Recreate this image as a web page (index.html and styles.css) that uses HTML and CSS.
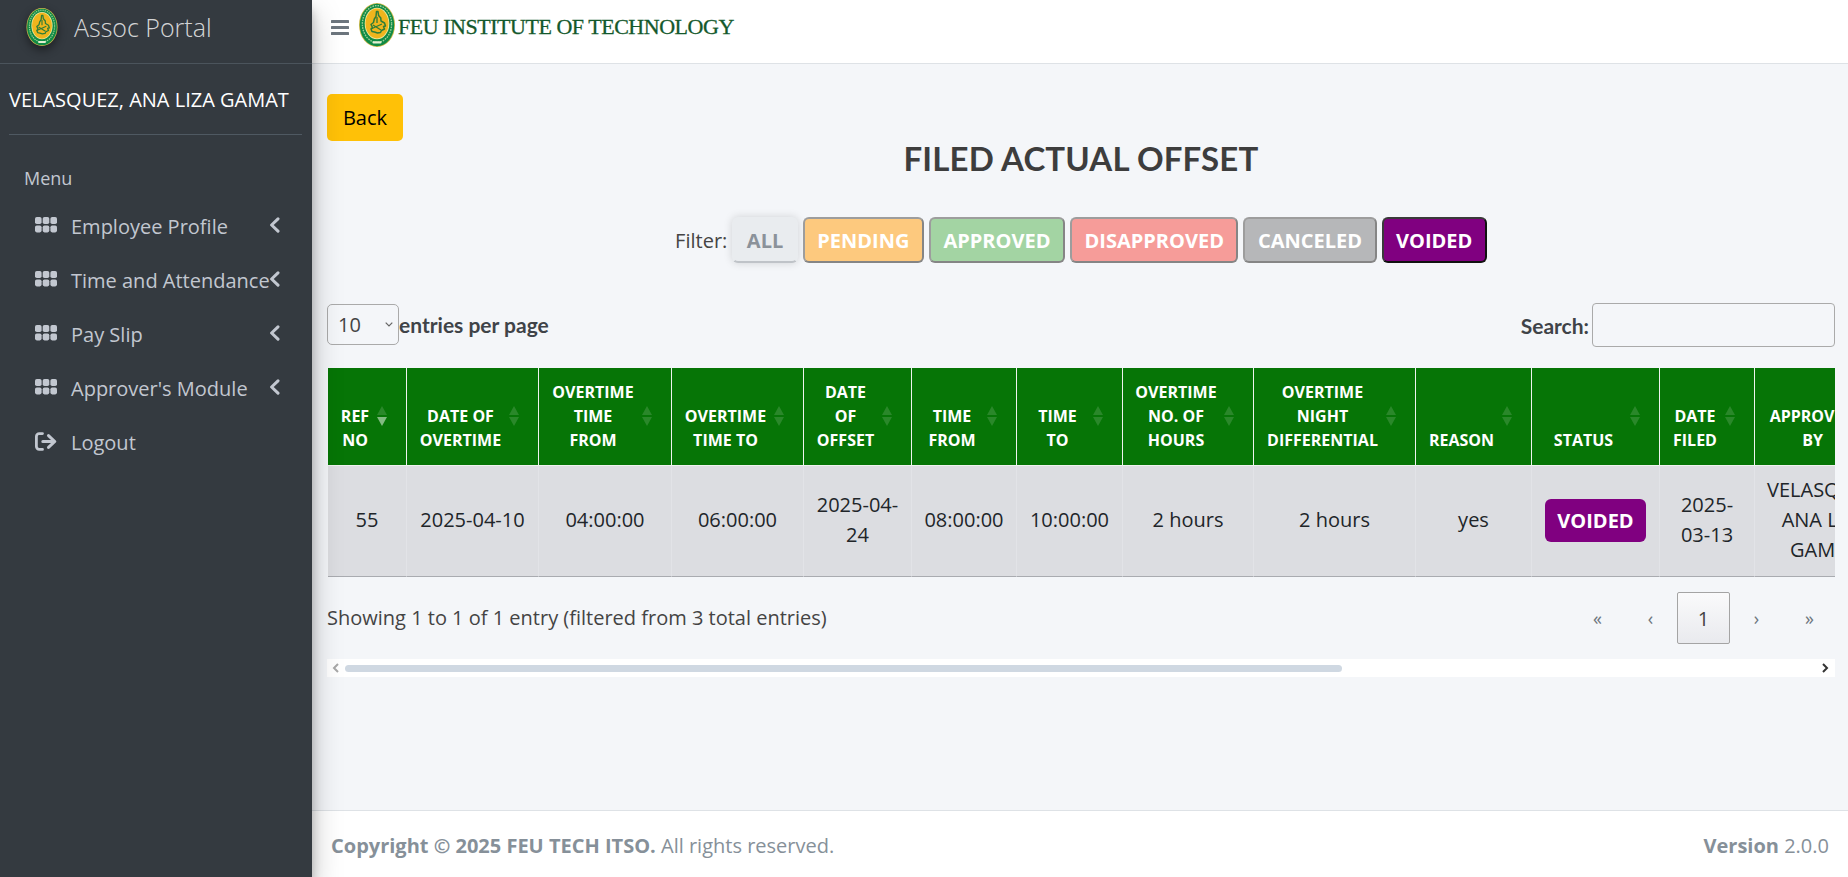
FILE: index.html
```html
<!DOCTYPE html>
<html lang="en">
<head>
<meta charset="utf-8">
<title>Filed Actual Offset</title>
<link rel="stylesheet" href="styles.css">
</head>
<body>
<svg class="defs" width="0" height="0" aria-hidden="true">
  <symbol id="seal" viewBox="0 0 36 44">
    <ellipse cx="18" cy="22" rx="18" ry="22" fill="#cdb84a"/>
    <ellipse cx="18" cy="22" rx="17.2" ry="21.2" fill="#108a45"/>
    <ellipse cx="18" cy="21" rx="14.6" ry="18.4" fill="none" stroke="#bfe0a8" stroke-width="1.400" stroke-dasharray="1.600 1" opacity=".8"/>
    <ellipse cx="18" cy="20.500" rx="12.300" ry="15.800" fill="#f0e7a0"/>
    <ellipse cx="18" cy="20.500" rx="11.500" ry="15" fill="#efb51d"/>
    <path d="M17.500 8.500h1.500l.6 4 2.200 2.500.2 3 3.500 2 1 3-2 .5 1 2.500-3 1.500-1 2-3 .5-3-1-2.500-.5-1-2.500 1.500-1.500-1.500-3 2.500-2 .8-3.500 1.700-2.500z" fill="none" stroke="#2f7d38" stroke-width="1.500" stroke-linejoin="round"/>
    <path d="M12 26l11-5M14 22l8 5M18 14v6" stroke="#2f7d38" stroke-width="1.300" fill="none"/>
    <rect x="13.500" y="38.300" width="9" height="2.200" rx="1" fill="#e4efd2"/>
  </symbol>
  <symbol id="grid" viewBox="0 0 22 16">
    <rect x="0" y="0" width="6.6" height="7" rx="1.800"/><rect x="7.700" y="0" width="6.600" height="7" rx="1.800"/><rect x="15.400" y="0" width="6.600" height="7" rx="1.800"/>
    <rect x="0" y="8.400" width="6.600" height="7" rx="1.800"/><rect x="7.700" y="8.400" width="6.600" height="7" rx="1.800"/><rect x="15.400" y="8.400" width="6.600" height="7" rx="1.800"/>
  </symbol>
  <symbol id="angle" viewBox="0 0 11 16">
    <path d="M9 1.800 2.600 8 9 14.200" fill="none" stroke="currentColor" stroke-width="3" stroke-linecap="round" stroke-linejoin="round"/>
  </symbol>
</svg>

<div class="app">
  <aside class="sidebar">
    <div class="brand">
      <svg class="brand-seal"><use href="#seal"/></svg>
      <span class="brand-text">Assoc Portal</span>
    </div>
    <div class="user">VELASQUEZ, ANA LIZA GAMAT</div>
    <nav class="nav">
      <div class="nav-head">Menu</div>
      <a class="nav-item"><svg class="nav-icon"><use href="#grid"/></svg><span class="nav-label">Employee Profile</span><svg class="nav-angle"><use href="#angle"/></svg></a>
      <a class="nav-item"><svg class="nav-icon"><use href="#grid"/></svg><span class="nav-label">Time and Attendance</span><svg class="nav-angle"><use href="#angle"/></svg></a>
      <a class="nav-item"><svg class="nav-icon"><use href="#grid"/></svg><span class="nav-label">Pay Slip</span><svg class="nav-angle"><use href="#angle"/></svg></a>
      <a class="nav-item"><svg class="nav-icon"><use href="#grid"/></svg><span class="nav-label">Approver's Module</span><svg class="nav-angle"><use href="#angle"/></svg></a>
      <a class="nav-item"><svg class="nav-icon nav-logout" viewBox="0 0 22 19"><path d="M7.500 1.600H4.200A2.800 2.800 0 0 0 1.400 4.400v10.200a2.800 2.800 0 0 0 2.800 2.800h3.300" fill="none" stroke="currentColor" stroke-width="2.800" stroke-linecap="round"/><path d="M7.800 9.500H19M13.500 3.600l6.300 5.900-6.300 5.900" fill="none" stroke="currentColor" stroke-width="3" stroke-linecap="round" stroke-linejoin="round"/></svg><span class="nav-label">Logout</span></a>
    </nav>
  </aside>

  <div class="main">
    <header class="topbar">
      <svg class="burger" viewBox="0 0 18 15"><rect width="18" height="3" y="0" rx=".6"/><rect width="18" height="3" y="6" rx=".6"/><rect width="18" height="3" y="12" rx=".6"/></svg>
      <svg class="top-seal"><use href="#seal"/></svg>
      <span class="top-title">FEU INSTITUTE OF TECHNOLOGY</span>
    </header>

    <main class="content">
      <div class="back-row"><button class="back">Back</button></div>
      <h1 class="title">FILED ACTUAL OFFSET</h1>

      <div class="filters">
        <span class="filter-label">Filter:</span>
        <button class="chip chip-all">ALL</button>
        <button class="chip chip-pending">PENDING</button>
        <button class="chip chip-approved">APPROVED</button>
        <button class="chip chip-disapproved">DISAPPROVED</button>
        <button class="chip chip-canceled">CANCELED</button>
        <button class="chip chip-voided">VOIDED</button>
      </div>

      <div class="controls">
        <label class="length"><select class="length-select"><option>10</option><option>25</option><option>50</option></select><span class="length-text">entries per page</span></label>
        <label class="search"><span>Search:</span><input class="search-input" type="search"></label>
      </div>

      <div class="table-clip">
        <table class="grid-table">
          <colgroup>
            <col class="c79"><col class="c132"><col class="c133"><col class="c132"><col class="c108"><col class="c105"><col class="c106"><col class="c131"><col class="c162"><col class="c116"><col class="c128"><col class="c95"><col class="c140">
          </colgroup>
          <thead>
            <tr>
              <th class="sorted">REF<br>NO<i class="up"></i><i class="down"></i></th>
              <th>DATE OF<br>OVERTIME<i class="up"></i><i class="down"></i></th>
              <th>OVERTIME<br>TIME<br>FROM<i class="up"></i><i class="down"></i></th>
              <th>OVERTIME<br>TIME TO<i class="up"></i><i class="down"></i></th>
              <th>DATE<br>OF<br>OFFSET<i class="up"></i><i class="down"></i></th>
              <th>TIME<br>FROM<i class="up"></i><i class="down"></i></th>
              <th>TIME<br>TO<i class="up"></i><i class="down"></i></th>
              <th>OVERTIME<br>NO. OF<br>HOURS<i class="up"></i><i class="down"></i></th>
              <th>OVERTIME<br>NIGHT<br>DIFFERENTIAL<i class="up"></i><i class="down"></i></th>
              <th>REASON<i class="up"></i><i class="down"></i></th>
              <th>STATUS<i class="up"></i><i class="down"></i></th>
              <th>DATE<br>FILED<i class="up"></i><i class="down"></i></th>
              <th>APPROVED<br>BY<i class="up"></i><i class="down"></i></th>
            </tr>
          </thead>
          <tbody>
            <tr>
              <td>55</td>
              <td>2025-04-10</td>
              <td>04:00:00</td>
              <td>06:00:00</td>
              <td>2025-04-24</td>
              <td>08:00:00</td>
              <td>10:00:00</td>
              <td>2 hours</td>
              <td>2 hours</td>
              <td>yes</td>
              <td><span class="badge">VOIDED</span></td>
              <td>2025-03-13</td>
              <td>VELASQUEZ, ANA LIZA GAMAT</td>
            </tr>
          </tbody>
        </table>
      </div>

      <div class="table-foot">
        <div class="info">Showing 1 to 1 of 1 entry (filtered from 3 total entries)</div>
        <div class="pager">
          <a class="page">«</a><a class="page">‹</a><a class="page page-current">1</a><a class="page">›</a><a class="page">»</a>
        </div>
      </div>

      <div class="hscroll">
        <svg class="hs-arrow hs-left" viewBox="0 0 8 10"><path d="M6 1 2 5l4 4" fill="none" stroke="currentColor" stroke-width="2"/></svg>
        <div class="hs-track"><div class="hs-thumb"></div></div>
        <svg class="hs-arrow hs-right" viewBox="0 0 8 10"><path d="M2 1l4 4-4 4" fill="none" stroke="currentColor" stroke-width="2"/></svg>
      </div>
    </main>

    <footer class="footer">
      <div><strong>Copyright © 2025 FEU TECH ITSO.</strong> All rights reserved.</div>
      <div><strong>Version</strong> 2.0.0</div>
    </footer>
  </div>
</div>
</body>
</html>
```
FILE: styles.css
```css
* { box-sizing: border-box; }
html, body { margin: 0; height: 100%; overflow: hidden; }
body { font-family: "Open Sans", "Liberation Sans", sans-serif; font-size: 20px; color: #212529; background: #f4f6f9; }
.defs { position: absolute; }
.app { display: flex; height: 877px; }

/* sidebar */
.sidebar { flex: 0 0 312px; background: #343a40; color: #c2c7d0; position: relative; z-index: 10;
  box-shadow: 0 14px 28px rgba(0,0,0,.25), 0 10px 10px rgba(0,0,0,.22); }
.brand { height: 64px; display: flex; align-items: center; padding-left: 26px; border-bottom: 1px solid #4b545c; }
.brand-seal { width: 32px; height: 38px; margin-top: -10px; filter: drop-shadow(0 4px 5px rgba(0,0,0,.45)); }
.brand-text { margin-left: 16px; margin-top: -10px; font-size: 25px; font-weight: 300; color: rgba(255,255,255,.8); }
.user { margin: 0 10px 0 9px; height: 71px; display: flex; align-items: center; color: #fff; font-size: 20px; font-weight: 500; border-bottom: 1px solid #4f5962; white-space: nowrap; }
.nav { padding-top: 31px; }
.nav-head { padding-left: 24px; height: 24px; margin-bottom: 9px; line-height: 24px; font-size: 18px; }
.nav-item { display: flex; align-items: center; height: 54px; padding-left: 35px; font-size: 20px; position: relative; }
.nav-icon { width: 22px; height: 16px; fill: #c2c7d0; flex: none; margin-top: -2px; }
.nav-logout { height: 19px; fill: none; }
.nav-label { margin-left: 14px; white-space: nowrap; }
.nav-angle { position: absolute; left: 269px; top: 18px; width: 11px; height: 16px; color: #c2c7d0; }

/* top */
.main { flex: 1; min-width: 0; display: flex; flex-direction: column; }
.topbar { height: 64px; flex: none; background: #fff; border-bottom: 1px solid #dee2e6; display: flex; align-items: center; padding-left: 19px; }
.burger { width: 18px; height: 15px; fill: #6c757d; margin-top: -8px; }
.top-seal { width: 36px; height: 44px; margin-left: 10px; margin-top: -14px; }
.top-title { margin-left: 3px; margin-top: -10px; font-family: "Liberation Serif", serif; font-size: 22px; letter-spacing: -.47px; color: #14592c; white-space: nowrap; -webkit-text-stroke: .3px #14592c; }

/* content */
.content { flex: 1; min-height: 0; padding: 30px 13px 0 15px; }
.back-row { height: 47px; }
.back { height: 47px; width: 76px; border: 0; border-radius: 5px; background: #ffc107; color: #000; font: 20px "Open Sans", sans-serif; }
.title { margin: 0; height: 76px; font-family: Lato, "Open Sans", sans-serif; font-weight: 700; font-size: 33px; line-height: 34px; letter-spacing: .15px; text-align: center; color: #3d3d3d; }
.filters { display: flex; justify-content: center; align-items: center; gap: 5px; height: 46px; color: #444; }
.filter-label { font-size: 20px; color: #444; }
.chip { height: 46px; padding: 0 12.5px; border: 2px solid; border-radius: 6px; font: 700 20px "Open Sans", sans-serif; color: #fff; }
.chip-all { background: #e9ecef; color: #8b929a; border-color: #e9ecef #e9ecef #bfc3c8 #e9ecef; box-shadow: 0 0 8px rgba(0,0,0,.15); }
.chip-pending { background: #fdc97e; border-color: #9d9d9d #858585 #858585 #9d9d9d; }
.chip-approved { background: #a3d4a3; border-color: #9d9d9d #858585 #858585 #9d9d9d; }
.chip-disapproved { background: #f69c99; border-color: #9d9d9d #858585 #858585 #9d9d9d; }
.chip-canceled { background: #b6b7b9; border-color: #9d9d9d #858585 #858585 #9d9d9d; }
.chip-voided { background: #800080; border-color: #3a3a3a #111 #111 #3a3a3a; }

.controls { display: flex; justify-content: space-between; align-items: center; margin-top: 40px; height: 44px; }
.length, .search { display: flex; align-items: center; font-family: Lato, "Open Sans", sans-serif; font-weight: 700; font-size: 21px; color: #3f4348; }
.length { margin-top: -2px; }
.length-select { appearance: none; width: 72px; height: 41px; padding-left: 10px; border: 1px solid #aaa; border-radius: 5px; font: 400 20px "Open Sans", sans-serif; color: #444;
  background: transparent url("data:image/svg+xml,%3Csvg xmlns='http://www.w3.org/2000/svg' width='8' height='5'%3E%3Cpath d='M.7.7 4 4 7.300.7' fill='none' stroke='%23666' stroke-width='1.200'/%3E%3C/svg%3E") no-repeat right 5px center; }
.search span { margin-right: 3px; }
.search-input { width: 243px; height: 44px; border: 1px solid #aaa; border-radius: 4px; background: transparent; }

/* table */
.table-clip { margin-top: 21px; overflow: hidden; }
.grid-table { border-collapse: separate; border-spacing: 0; table-layout: fixed; width: 1567px; margin-left: 1px; }
.c79 { width: 79px; } .c95 { width: 95px; } .c105 { width: 105px; } .c106 { width: 106px; } .c108 { width: 108px; }
.c116 { width: 116px; } .c128 { width: 128px; } .c131 { width: 131px; } .c132 { width: 132px; } .c133 { width: 133px; }
.c140 { width: 140px; } .c162 { width: 162px; }
.grid-table th { position: relative; height: 98px; padding: 12px 36px 13px 12px; background: #067506; color: #fff; font-size: 16px; font-weight: 700; line-height: 24px; text-align: center; vertical-align: bottom; border-right: 1px solid #eef3ee; border-bottom: 1px solid #eef3ee; white-space: nowrap; }
.grid-table th i { position: absolute; right: 19px; width: 0; height: 0; border-left: 5px solid transparent; border-right: 5px solid transparent; }
.grid-table th .up { top: 38px; border-bottom: 9px solid #2a882a; }
.grid-table th .down { top: 49px; border-top: 9px solid #2a882a; }
.grid-table th.sorted .down { border-top-color: #82ba82; }
.grid-table td { height: 111px; padding: 9px 12px 11px; background: #dcdde1; line-height: 30px; text-align: center; border-right: 1px solid #e2e3e7; border-bottom: 1px solid #a9abb0; }
.badge { display: inline-block; width: 101px; height: 43px; line-height: 43px; border-radius: 6px; background: #800080; color: #fff; font-weight: 700; font-size: 20px; }

.table-foot { display: flex; justify-content: space-between; align-items: center; margin-top: 14px; height: 54px; }
.info { font-size: 20px; color: #444; padding-bottom: 2px; }
.pager { display: flex; margin-right: -1px; }
.page { width: 53px; height: 52px; display: flex; align-items: center; justify-content: center; color: #6c757d; font-size: 18px; border: 1px solid transparent; }
.page-current { border-color: #a4a4a4; border-radius: 2px; background: linear-gradient(#fafafb, #e9eaee); color: #444; font-size: 20px; }

.hscroll { margin-top: 14px; height: 18px; background: #fff; display: flex; align-items: center; }
.hs-arrow { flex: none; width: 8px; height: 10px; color: #a8a8a8; }
.hs-left { margin-left: 5px; }
.hs-right { margin-left: auto; margin-right: 6px; color: #333; }
.hs-track { margin-left: 5px; width: 997px; }
.hs-thumb { height: 7px; border-radius: 4px; background: #cfd8e2; }

/* footer */
.footer { flex: none; height: 67px; padding: 2px 19px 0 19px; background: #fff; border-top: 1px solid #dee2e6; display: flex; justify-content: space-between; align-items: center; font-size: 20px; color: #869099; }
.footer strong { font-weight: 700; }
```
